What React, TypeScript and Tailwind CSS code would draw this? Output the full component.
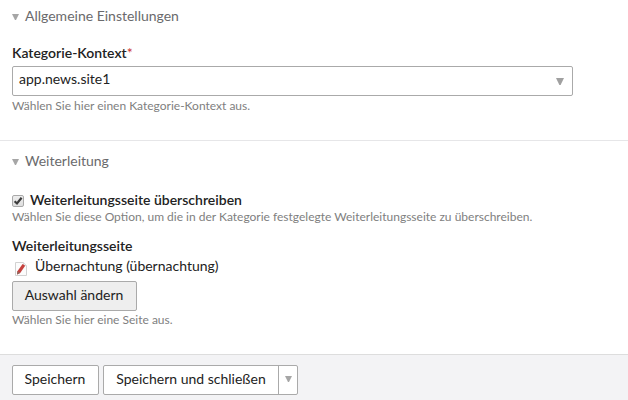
import React from "react";

function Triangle({ className }: { className: string }) {
  return (
    <svg className={className} viewBox="0 0 8 7" preserveAspectRatio="none" aria-hidden="true">
      <path d="M0 0H8L4.6 7H3.4Z" fill="currentColor" />
    </svg>
  );
}

function Legend({ children }: { children: React.ReactNode }) {
  return (
    <h2 className="flex h-5 items-center text-[14px] leading-5 text-[#6a6a6c]">
      <Triangle className="mr-[6px] mt-[2px] h-[6px] w-[7px] text-[#a6a6a6]" />
      {children}
    </h2>
  );
}

function Help({ children }: { children: React.ReactNode }) {
  return <p className="text-[12px] leading-4 text-[#808080]">{children}</p>;
}

function Checkbox() {
  return (
    <span className="relative mr-[6px] mt-[2px] block h-3 w-3 rounded-[2px] border border-[#a9a9a9] bg-linear-to-b from-[#ededed] to-[#dedede]">
      <input type="checkbox" defaultChecked className="peer absolute inset-0 h-full w-full opacity-0" />
      <svg className="pointer-events-none block h-[10px] w-[10px] opacity-0 peer-checked:opacity-100" viewBox="0 0 10 10" aria-hidden="true">
        <path d="M1.6 5.2L4 7.5L8.6 1.8" fill="none" stroke="#3c3c3c" strokeWidth="2.2" />
      </svg>
    </span>
  );
}

function PageIcon() {
  return (
    <svg className="mr-[7px] mt-[6px] block h-4 w-4" viewBox="0 0 16 16" aria-hidden="true">
      <path d="M3.5 1.5H11.5L14.5 4.5V14.5H3.5Z" fill="#fcfcfc" stroke="#d2d2d2" />
      <path d="M11.5 1.5V4.5H14.5" fill="#eee" stroke="#dcdcdc" />
      <path d="M5.4 10.2L10.6 3L13.2 4.8L8.2 12L5 13.4Z" fill="#c6413e" />
      <path d="M5.4 10.2L5 13.4L8 12Z" fill="#8a6a60" />
    </svg>
  );
}

export default function App() {
  return (
    <div className="flex h-[400px] w-[628px] flex-col overflow-hidden bg-white font-['Lato',sans-serif] text-[14px] leading-5 text-[#222]">
      <section className="h-[141px] shrink-0 border-b border-[#e6e6e8] px-3 pt-[6px]">
        <Legend>Allgemeine Einstellungen</Legend>
        <h3 className="mt-[17px] font-semibold">
          Kategorie-Kontext<span className="font-normal text-[#c33]">*</span>
        </h3>
        <div className="mt-[3px] flex h-[30px] w-[561px] items-center justify-between rounded-[2px] border border-[#aaa] pl-[6px] pr-[8px]">
          <span className="-mt-1">app.news.site1</span>
          <Triangle className="h-[7px] w-2 text-[#a0a0a0]" />
        </div>
        <div className="mt-[2px]">
          <Help>Wählen Sie hier einen Kategorie-Kontext aus.</Help>
        </div>
      </section>
      <section className="h-[213px] shrink-0 px-3 pt-[10px]">
        <Legend>Weiterleitung</Legend>
        <label className="mt-[19px] flex h-[19px] items-center font-semibold">
          <Checkbox />
          Weiterleitungsseite überschreiben
        </label>
        <Help>Wählen Sie diese Option, um die in der Kategorie festgelegte Weiterleitungsseite zu überschreiben.</Help>
        <h3 className="mt-[11px] font-semibold">Weiterleitungsseite</h3>
        <div className="flex h-5 items-center">
          <PageIcon />
          Übernachtung (übernachtung)
        </div>
        <button className="mb-[1px] mt-[5px] block h-[30px] w-[125px] rounded-[2px] border border-[#aaa] bg-[#eee] pb-[2px] pr-[1px]">
          Auswahl ändern
        </button>
        <Help>Wählen Sie hier eine Seite aus.</Help>
      </section>
      <footer className="flex flex-1 items-start gap-1 border-t border-[#ddd] bg-[#f3f3f5] px-3 pt-[10px]">
        <button className="h-[30px] w-[87px] rounded-[2px] border border-[#aaa] bg-white pb-[2px] pr-[1px]">Speichern</button>
        <div className="flex h-[30px] w-[195px] rounded-[2px] border border-[#aaa] bg-white">
          <button className="w-[175px] border-r border-[#aaa] pb-[2px]">Speichern und schließen</button>
          <button className="flex flex-1 items-center justify-center pb-[2px]" aria-label="Mehr">
            <Triangle className="h-[6px] w-[7px] text-[#a6a6a6]" />
          </button>
        </div>
      </footer>
    </div>
  );
}
